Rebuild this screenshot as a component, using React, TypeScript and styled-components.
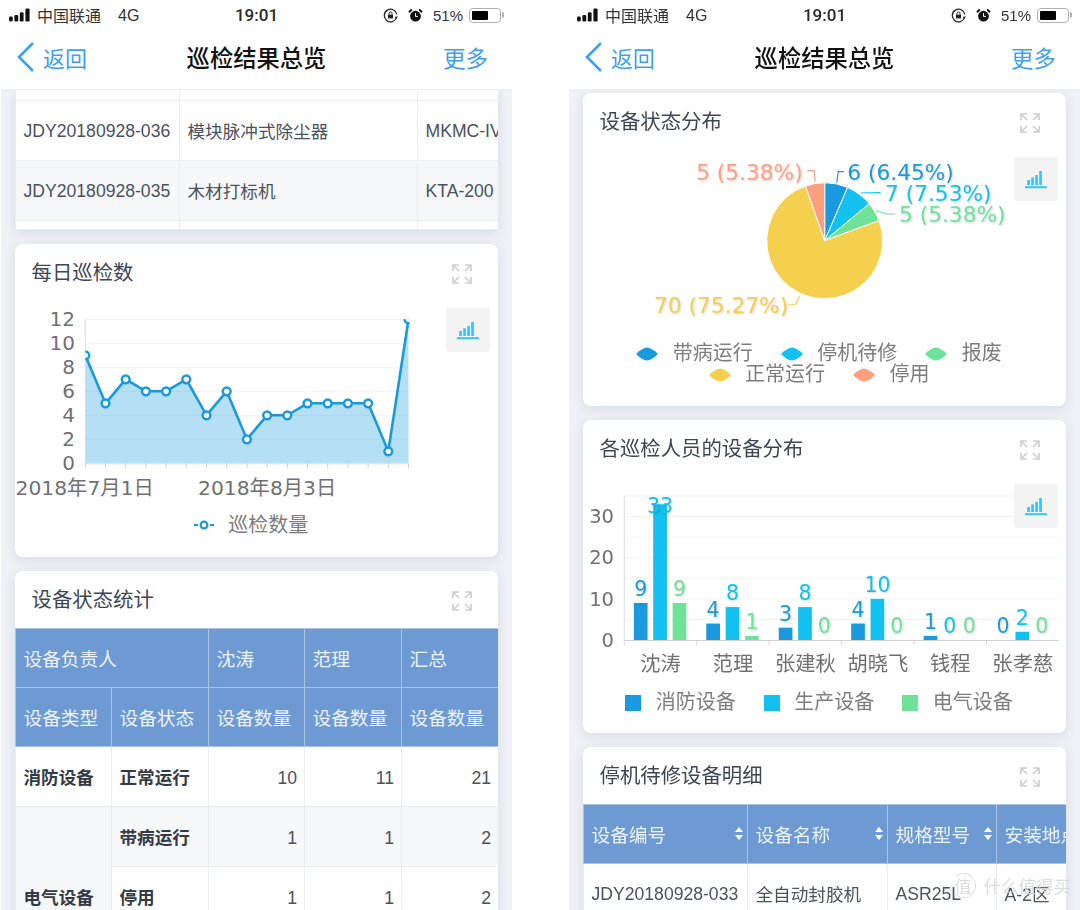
import styled, { createGlobalStyle } from "styled-components";

const SANS = `"Liberation Sans", "Noto Sans CJK SC", sans-serif`;
const CHART = `"DejaVu Sans", "Noto Sans CJK SC", sans-serif`;

const BLUE = "#1a9ade";
const CYAN = "#12c1ef";
const GREEN = "#6fe29a";
const YELLOW = "#f5d04f";
const ORANGE = "#ff9f7f";

const GlobalStyle = createGlobalStyle`
  html, body {
    margin: 0;
    padding: 0;
    background: #fff;
    font-family: ${SANS};
  }
`;

// page
const Page = styled.div`
  position: relative;
  width: 1080px;
  height: 910px;
  overflow: hidden;
  display: flex;
  gap: 57px;
  padding-left: 1px;
  box-sizing: border-box;
  filter: blur(0.35px);
`;

const Phone = styled.div`
  width: 511px;
  height: 910px;
  flex: none;
  overflow: hidden;
  display: flex;
  flex-direction: column;
  background: #f1f3f7;
`;

// status bar
const StatusBar = styled.div`
  height: 30px;
  flex: none;
  background: #fff;
  display: grid;
  grid-template-columns: 1fr auto 1fr;
  align-items: center;
  padding: 0 11px 0 7px;
  box-sizing: border-box;
  color: #333;
  font-size: 16px;
`;

const StatusLeft = styled.div`
  display: flex;
  align-items: center;
  gap: 5px;
`;

const Network = styled.span`
  margin: 2px 0 0 12px;
`;

const StatusTime = styled.div`
  margin-left: 4px;
  font-family: Roboto, sans-serif;
  font-size: 17px;
  font-weight: 500;
  color: #2a2a2a;
`;

const StatusRight = styled.div`
  display: flex;
  align-items: center;
  justify-content: flex-end;
  gap: 10px;
  font-size: 15px;
`;

const Battery = styled.div`
  width: 32px;
  height: 15px;
  margin-left: -4px;
  border: 1.5px solid #b0b0b0;
  border-radius: 4px;
  padding: 2px;
  box-sizing: border-box;
  position: relative;

  &::before {
    content: "";
    display: block;
    width: 16px;
    height: 100%;
    background: #000;
    border-radius: 1px;
  }

  &::after {
    content: "";
    position: absolute;
    right: -4px;
    top: 3px;
    width: 2px;
    height: 6px;
    background: #b0b0b0;
    border-radius: 0 2px 2px 0;
  }
`;

// nav bar
const NavBar = styled.div`
  height: 59px;
  flex: none;
  background: #fff;
  display: grid;
  grid-template-columns: 1fr auto 1fr;
  align-items: center;
  padding: 0 23px 5px;
  box-sizing: border-box;
`;

const NavBack = styled.div`
  display: flex;
  align-items: center;
  gap: 8px;
  margin-left: -8px;
  font-size: 22px;
  color: #3c9ff5;
`;

const NavTitle = styled.div`
  font-size: 23.3px;
  font-weight: 500;
  color: #111;
`;

const NavMore = styled.div`
  text-align: right;
  margin-right: 1px;
  font-size: 22.5px;
  color: #3c9ff5;
`;

// content
const Content = styled.div<{ $top: number }>`
  flex: 1;
  min-height: 0;
  overflow: hidden;
  display: flex;
  flex-direction: column;
  gap: 14px;
  padding: ${(p) => p.$top}px 14px 0;
  background: #eff1f6;
`;

const Card = styled.section<{ $flat?: boolean }>`
  position: relative;
  flex: none;
  background: #fff;
  border-radius: ${(p) => (p.$flat ? "0 0 4px 4px" : "8px")};
  box-shadow: 0 3px 12px rgba(70, 80, 110, 0.13);
  overflow: hidden;
`;

const CardHeader = styled.header`
  height: 57px;
  box-sizing: border-box;
  padding: 17px 26px 0 16.5px;
  display: flex;
  justify-content: space-between;
  align-items: flex-start;
`;

const CardTitle = styled.h2`
  margin: 0;
  font-size: 20.4px;
  line-height: 24px;
  font-weight: 400;
  color: #3d4654;
`;

const ExpandIcon = styled.svg`
  margin-top: 3px;
  flex: none;
`;

const ToolButton = styled.div`
  position: absolute;
  top: 64px;
  right: 8px;
  width: 44px;
  height: 44px;
  border-radius: 3px;
  background: #f3f3f3;
  display: flex;
  align-items: center;
  justify-content: center;
`;

const ChartSvg = styled.svg`
  display: block;
`;

const AxisText = styled.text<{ $size?: number }>`
  font-family: ${CHART};
  font-size: ${(p) => p.$size ?? 19.5}px;
  fill: #707070;
`;

const ValueText = styled.text`
  font-family: ${CHART};
  font-size: 20.5px;
  text-anchor: middle;
  filter: drop-shadow(1px 1px 1px rgba(0, 0, 0, 0.18));
`;

const PieLabel = styled.text`
  font-family: ${CHART};
  font-size: 21.7px;
  filter: drop-shadow(1px 1px 1px rgba(0, 0, 0, 0.18));
`;

const Legend = styled.div<{ $top?: number }>`
  display: flex;
  flex-wrap: wrap;
  justify-content: center;
  column-gap: 28px;
  padding: ${(p) => p.$top ?? 2}px 28px ${(p) => 22 - (p.$top ?? 2)}px 17px;
  font-family: ${CHART};
  font-size: 20px;
  line-height: 21.4px;
  color: #7d7d7d;
`;

const LegendItem = styled.div`
  display: flex;
  align-items: center;
  gap: 14.5px;
`;

const LegendBreak = styled.div`
  flex-basis: 100%;
`;

const LegendSquare = styled.i<{ $color: string }>`
  display: block;
  width: 16px;
  height: 16px;
  background: ${(p) => p.$color};
`;

// tables
const Table = styled.table`
  width: 100%;
  table-layout: fixed;
  border-collapse: collapse;
`;

const Th = styled.th`
  height: 59px;
  padding: 0 4px 1px 7.5px;
  box-sizing: border-box;
  background: #6d9ad3;
  border: 1px solid #a9c3e5;
  color: #edf3fb;
  font-size: 18.7px;
  font-weight: 400;
  text-align: left;
  white-space: nowrap;
  overflow: hidden;
`;

const ThInner = styled.div`
  display: flex;
  align-items: center;
  justify-content: space-between;
`;

const Tr = styled.tr<{ $alt?: boolean }>`
  background: ${(p) => (p.$alt ? "#f6f7f9" : "#fff")};
`;

const Td = styled.td<{ $h?: number; $bold?: boolean; $num?: boolean; $alt?: boolean; $code?: boolean }>`
  height: ${(p) => p.$h ?? 60}px;
  padding: ${(p) => (p.$num ? "4px 7px 0 7.5px" : p.$code ? "2px 0 0 7.5px" : "0 0 0 7.5px")};
  box-sizing: border-box;
  border: 1px solid #ebedf0;
  color: ${(p) => (p.$bold ? "#333a45" : "#4a5160")};
  background: ${(p) => (p.$alt ? "#f6f7f9" : "transparent")};
  font-size: 17.6px;
  font-weight: ${(p) => (p.$bold ? 700 : 400)};
  text-align: ${(p) => (p.$num ? "right" : "left")};
  white-space: nowrap;
  overflow: hidden;
`;

// watermark
const Watermark = styled.div`
  position: absolute;
  right: 9px;
  bottom: 12px;
  display: flex;
  align-items: center;
  gap: 8px;
  color: rgba(215, 215, 215, 0.85);
  font-size: 17.5px;
  font-family: "Noto Sans CJK SC", sans-serif;
`;

const WatermarkMark = styled.span`
  width: 23px;
  height: 23px;
  border-radius: 50%;
  border: 1px solid rgba(215, 215, 215, 0.85);
  border-left-color: transparent;
  display: flex;
  align-items: center;
  justify-content: center;
  font-size: 17px;
`;

// icons
function SignalIcon() {
  return (
    <svg width="24" height="14" viewBox="0 0 24 14">
      <rect x="1" y="8.6" width="3.8" height="4.8" rx="1.4" fill="#111" />
      <rect x="6.4" y="7" width="3.8" height="6.4" rx="1.2" fill="#111" />
      <rect x="11.8" y="4.2" width="3.8" height="9.2" rx="1.2" fill="#111" />
      <rect x="17.4" y="0.6" width="4.2" height="12.8" rx="1.2" fill="#111" />
    </svg>
  );
}

function RotateLockIcon() {
  return (
    <svg width="15" height="15" viewBox="0 0 15 15">
      <path d="M13.6 9.4A6.3 6.3 0 1 1 13.8 6.4" fill="none" stroke="#222" strokeWidth="1.3" />
      <path d="M14.8 8.6l-3 .2 1.8 2.2z" fill="#222" />
      <rect x="5" y="6.6" width="5" height="3.8" fill="#222" />
      <path d="M6 6.6V5.4a1.5 1.5 0 0 1 3 0v1.2" fill="none" stroke="#222" strokeWidth="1" />
    </svg>
  );
}

function AlarmIcon() {
  return (
    <svg width="15" height="15" viewBox="0 0 15 15">
      <circle cx="7.5" cy="8.2" r="5.4" fill="#111" />
      <path d="M1 4.2L3.8 1.4 M14 4.2L11.2 1.4" stroke="#111" strokeWidth="2" />
      <path d="M7.5 5.2v3.2h2.4" fill="none" stroke="#fff" strokeWidth="1" />
    </svg>
  );
}

function BackIcon() {
  return (
    <svg width="19" height="32" viewBox="0 0 19 32">
      <path d="M17 2L3 16l14 14" fill="none" stroke="#3c9ff5" strokeWidth="2.6" />
    </svg>
  );
}

function Expand() {
  return (
    <ExpandIcon width="20" height="20" viewBox="0 0 20 20" fill="none" stroke="#cfcfcf" strokeWidth="1.7">
      <path d="M1 7V1h6 M1 1l6 6" />
      <path d="M13 1h6v6 M19 1l-6 6" />
      <path d="M1 13v6h6 M1 19l6-6" />
      <path d="M13 19h6v-6 M19 19l-6-6" />
    </ExpandIcon>
  );
}

function BarTool() {
  return (
    <svg width="24" height="20" viewBox="0 0 24 20" fill="#33c5ff">
      <rect x="3.2" y="11" width="2.7" height="5" />
      <rect x="7.2" y="8.4" width="2.7" height="7.6" />
      <rect x="11.2" y="6" width="2.7" height="10" />
      <rect x="15.2" y="2" width="2.7" height="14" />
      <rect x="1" y="17.2" width="22" height="2" />
    </svg>
  );
}

function SortIcon() {
  return (
    <svg width="8" height="13" viewBox="0 0 8 13" fill="#fff">
      <path d="M4 0l4 5H0z" />
      <path d="M4 13L0 8h8z" />
    </svg>
  );
}

function LegendLens({ color }: { color: string }) {
  return (
    <svg width="22" height="14" viewBox="0 0 22 14">
      <path d="M0 7Q6 1 11 0.5 16 1 22 7 16 13 11 13.5 6 13 0 7z" fill={color} />
    </svg>
  );
}

// line chart
const dailyCounts = [9, 5, 7, 6, 6, 7, 4, 6, 2, 4, 4, 5, 5, 5, 5, 1, 12];
const LINE_X0 = 85.3;
const LINE_DX = 20.2;
const LINE_Y0 = 463.3;
const LINE_UNIT = 12;

function DailyChart() {
  const pts = dailyCounts.map((v, i) => [LINE_X0 + LINE_DX * i, LINE_Y0 - LINE_UNIT * v]);
  const line = pts.map((p) => p.join(",")).join(" ");
  const xEnd = LINE_X0 + LINE_DX * 16;
  return (
    <ChartSvg width="483" height="212.5" viewBox="15 301 483 212.5">
      <defs>
        <clipPath id="line-clip">
          <rect x={LINE_X0} y={319.3} width={xEnd - LINE_X0 + 1} height={146} />
        </clipPath>
      </defs>
      {[0, 2, 4, 6, 8, 10, 12].map((v) => (
        <g key={v}>
          {v > 0 && <line x1={LINE_X0} x2={xEnd} y1={LINE_Y0 - v * LINE_UNIT} y2={LINE_Y0 - v * LINE_UNIT} stroke="#f3f3f3" />}
          <AxisText x="75" y={LINE_Y0 - v * LINE_UNIT + 7} textAnchor="end" $size={20}>{v}</AxisText>
        </g>
      ))}
      <polygon points={`${LINE_X0},${LINE_Y0} ${line} ${xEnd},${LINE_Y0}`} fill={BLUE} fillOpacity="0.32" />
      <line x1={LINE_X0} x2={LINE_X0} y1="319" y2={LINE_Y0} stroke="#dcdcdc" />
      <line x1={LINE_X0} x2={xEnd} y1={LINE_Y0 + 0.5} y2={LINE_Y0 + 0.5} stroke="#dcdcdc" />
      {dailyCounts.map((_, i) => (
        <line key={i} x1={LINE_X0 + LINE_DX * i} x2={LINE_X0 + LINE_DX * i} y1={LINE_Y0} y2={LINE_Y0 + 5} stroke="#cfcfcf" />
      ))}
      <g clipPath="url(#line-clip)">
        <polyline points={line} fill="none" stroke={BLUE} strokeWidth="2.6" />
        {pts.map((p, i) => (
          <circle key={i} cx={p[0]} cy={p[1]} r="3.9" fill="#fff" stroke={BLUE} strokeWidth="2.5" />
        ))}
      </g>
      <AxisText x="15.5" y="495" $size={20.3}>2018年7月1日</AxisText>
      <AxisText x="198" y="495" $size={20.3}>2018年8月3日</AxisText>
    </ChartSvg>
  );
}

// pie chart
const pieSlices = [
  { value: 6, color: BLUE },
  { value: 7, color: CYAN },
  { value: 5, color: GREEN },
  { value: 70, color: YELLOW },
  { value: 5, color: ORANGE },
];
const PIE_CX = 824.7;
const PIE_CY = 240.7;
const PIE_R = 58;

function slicePath(from: number, to: number) {
  const pt = (a: number) => {
    const rad = (a / 93) * Math.PI * 2 - Math.PI / 2;
    return `${PIE_CX + PIE_R * Math.cos(rad)} ${PIE_CY + PIE_R * Math.sin(rad)}`;
  };
  const large = to - from > 46.5 ? 1 : 0;
  return `M${PIE_CX} ${PIE_CY}L${pt(from)}A${PIE_R} ${PIE_R} 0 ${large} 1 ${pt(to)}Z`;
}

const pieLabels = [
  { text: "5 (5.38%)", x: 802.7, y: 180, anchor: "end", color: ORANGE, leader: "M807.3 170.7h7l.7 11" },
  { text: "6 (6.45%)", x: 847.3, y: 180, anchor: "start", color: BLUE, leader: "M844 171.7h-5.7l-1.6 11" },
  { text: "7 (7.53%)", x: 885, y: 200.7, anchor: "start", color: CYAN, leader: "M860.7 193l20-.3" },
  { text: "5 (5.38%)", x: 899, y: 221.7, anchor: "start", color: GREEN, leader: "M876 210.7l10.7 3.3h8.3" },
  { text: "70 (75.27%)", x: 654, y: 313.3, anchor: "start", color: YELLOW, leader: "M799.3 296l-3.3 8-7.7 1" },
];

function StatusPie() {
  let acc = 0;
  return (
    <ChartSvg width="483" height="191" viewBox="583 150 483 191">
      {pieSlices.map((s) => {
        const d = slicePath(acc, acc + s.value);
        acc += s.value;
        return <path key={s.color} d={d} fill={s.color} stroke="#fff" strokeWidth="1" />;
      })}
      {pieLabels.map((l) => (
        <g key={l.x}>
          <path d={l.leader} fill="none" stroke={l.color} strokeWidth="1.2" />
          <PieLabel x={l.x} y={l.y} textAnchor={l.anchor} fill={l.color}>{l.text}</PieLabel>
        </g>
      ))}
    </ChartSvg>
  );
}

// bar chart
const people = [
  { name: "沈涛", values: [9, 33, 9] },
  { name: "范理", values: [4, 8, 1] },
  { name: "张建秋", values: [3, 8, 0] },
  { name: "胡晓飞", values: [4, 10, 0] },
  { name: "钱程", values: [1, 0, 0] },
  { name: "张孝慈", values: [0, 2, 0] },
];
const barColors = [BLUE, CYAN, GREEN];
const BAR_X0 = 624.3;
const BAR_GROUP = 72.45;
const BAR_Y0 = 640;
const BAR_UNIT = 4.114;

function PeopleBars() {
  return (
    <ChartSvg width="483" height="213" viewBox="583 477 483 213">
      {[5, 10, 15, 20, 25, 30, 35].map((v) => (
        <line key={v} x1={BAR_X0} x2="1059" y1={BAR_Y0 - v * BAR_UNIT} y2={BAR_Y0 - v * BAR_UNIT} stroke="#f3f3f3" />
      ))}
      <line x1={BAR_X0} x2={BAR_X0} y1="496" y2={BAR_Y0} stroke="#dcdcdc" />
      <line x1={BAR_X0} x2="1059" y1={BAR_Y0 + 0.5} y2={BAR_Y0 + 0.5} stroke="#d4d4d4" />
      {people.map((_, i) => (
        <line key={i} x1={BAR_X0 + BAR_GROUP * i} x2={BAR_X0 + BAR_GROUP * i} y1={BAR_Y0} y2={BAR_Y0 + 5} stroke="#d4d4d4" />
      ))}
      <AxisText x="614" y="522.7" textAnchor="end">30</AxisText>
      <AxisText x="614" y="564" textAnchor="end">20</AxisText>
      <AxisText x="614" y="606" textAnchor="end">10</AxisText>
      <AxisText x="614" y="646.7" textAnchor="end">0</AxisText>
      {people.map((p, g) => {
        const c = BAR_X0 + BAR_GROUP * (g + 0.5);
        return (
          <g key={p.name}>
            {p.values.map((v, i) => {
              const h = v * BAR_UNIT;
              const x = c - 26.7 + 19.4 * i;
              const labelY = v === 33 ? 513 : BAR_Y0 - h - 7;
              return (
                <g key={i}>
                  <rect x={x} y={BAR_Y0 - h} width="13.7" height={h} fill={barColors[i]} />
                  <ValueText x={x + 6.85} y={labelY} fill={barColors[i]}>{v}</ValueText>
                </g>
              );
            })}
            <AxisText x={c} y="670.7" textAnchor="middle" $size={20.3}>{p.name}</AxisText>
          </g>
        );
      })}
    </ChartSvg>
  );
}

function CardHead({ title }: { title: string }) {
  return (
    <CardHeader>
      <CardTitle>{title}</CardTitle>
      <Expand />
    </CardHeader>
  );
}

function ChartTool() {
  return (
    <ToolButton>
      <BarTool />
    </ToolButton>
  );
}

function StatusHeader() {
  return (
    <>
      <StatusBar>
        <StatusLeft>
          <SignalIcon />
          <span>中国联通</span>
          <Network>4G</Network>
        </StatusLeft>
        <StatusTime>19:01</StatusTime>
        <StatusRight>
          <RotateLockIcon />
          <AlarmIcon />
          <span>51%</span>
          <Battery />
        </StatusRight>
      </StatusBar>
      <NavBar>
        <NavBack>
          <BackIcon />
          返回
        </NavBack>
        <NavTitle>巡检结果总览</NavTitle>
        <NavMore>更多</NavMore>
      </NavBar>
    </>
  );
}

const listRows = [
  { id: "JDY20180928-036", name: "模块脉冲式除尘器", model: "MKMC-IV" },
  { id: "JDY20180928-035", name: "木材打标机", model: "KTA-200" },
];

const detailHead = ["设备编号", "设备名称", "规格型号", "安装地点"];

export default function App() {
  return (
    <Page>
      <GlobalStyle />
      <Phone>
        <StatusHeader />
        <Content $top={0}>
          <Card $flat>
            <Table>
              <colgroup>
                <col width="164" />
                <col width="238" />
                <col width="81" />
              </colgroup>
              <tbody>
                <Tr>
                  <Td $h={11} />
                  <Td $h={11} />
                  <Td $h={11} />
                </Tr>
                {listRows.map((r, i) => (
                  <Tr key={r.id} $alt={i === 1}>
                    <Td $code>{r.id}</Td>
                    <Td>{r.name}</Td>
                    <Td $code>{r.model}</Td>
                  </Tr>
                ))}
                <Tr>
                  <Td $h={9} />
                  <Td $h={9} />
                  <Td $h={9} />
                </Tr>
              </tbody>
            </Table>
          </Card>

          <Card>
            <CardHead title="每日巡检数" />
            <DailyChart />
            <Legend $top={1}>
              <LegendItem>
                <svg width="20" height="10" viewBox="0 0 20 10">
                  <path d="M0 5h4 M16 5h4" stroke={BLUE} strokeWidth="2" />
                  <circle cx="10" cy="5" r="3.4" fill="#fff" stroke={BLUE} strokeWidth="2.2" />
                </svg>
                巡检数量
              </LegendItem>
            </Legend>
            <ChartTool />
          </Card>

          <Card>
            <CardHead title="设备状态统计" />
            <Table>
              <colgroup>
                <col width="96" />
                <col width="97" />
                <col width="96" />
                <col width="97" />
                <col width="97" />
              </colgroup>
              <thead>
                <tr>
                  <Th colSpan={2}>设备负责人</Th>
                  <Th>沈涛</Th>
                  <Th>范理</Th>
                  <Th>汇总</Th>
                </tr>
                <tr>
                  <Th>设备类型</Th>
                  <Th>设备状态</Th>
                  <Th>设备数量</Th>
                  <Th>设备数量</Th>
                  <Th>设备数量</Th>
                </tr>
              </thead>
              <tbody>
                <Tr>
                  <Td $bold>消防设备</Td>
                  <Td $bold>正常运行</Td>
                  <Td $num>10</Td>
                  <Td $num>11</Td>
                  <Td $num>21</Td>
                </Tr>
                <Tr $alt>
                  <Td $bold $alt rowSpan={3}>电气设备</Td>
                  <Td $bold>带病运行</Td>
                  <Td $num>1</Td>
                  <Td $num>1</Td>
                  <Td $num>2</Td>
                </Tr>
                <Tr>
                  <Td $bold>停用</Td>
                  <Td $num>1</Td>
                  <Td $num>1</Td>
                  <Td $num>2</Td>
                </Tr>
                <Tr $alt>
                  <Td />
                  <Td $num />
                  <Td $num />
                  <Td $num />
                </Tr>
              </tbody>
            </Table>
          </Card>
        </Content>
      </Phone>

      <Phone>
        <StatusHeader />
        <Content $top={4}>
          <Card>
            <CardHead title="设备状态分布" />
            <StatusPie />
            <Legend>
              <LegendItem><LegendLens color={BLUE} />带病运行</LegendItem>
              <LegendItem><LegendLens color={CYAN} />停机待修</LegendItem>
              <LegendItem><LegendLens color={GREEN} />报废</LegendItem>
              <LegendBreak />
              <LegendItem><LegendLens color={YELLOW} />正常运行</LegendItem>
              <LegendItem><LegendLens color={ORANGE} />停用</LegendItem>
            </Legend>
            <ChartTool />
          </Card>

          <Card>
            <CardHead title="各巡检人员的设备分布" />
            <PeopleBars />
            <Legend>
              <LegendItem><LegendSquare $color={BLUE} />消防设备</LegendItem>
              <LegendItem><LegendSquare $color={CYAN} />生产设备</LegendItem>
              <LegendItem><LegendSquare $color={GREEN} />电气设备</LegendItem>
            </Legend>
            <ChartTool />
          </Card>

          <Card>
            <CardHead title="停机待修设备明细" />
            <Table>
              <colgroup>
                <col width="164" />
                <col width="140" />
                <col width="109" />
                <col width="70" />
              </colgroup>
              <thead>
                <tr>
                  {detailHead.map((h) => (
                    <Th key={h}>
                      <ThInner>
                        {h}
                        <SortIcon />
                      </ThInner>
                    </Th>
                  ))}
                </tr>
              </thead>
              <tbody>
                <Tr>
                  <Td $code>JDY20180928-033</Td>
                  <Td>全自动封胶机</Td>
                  <Td $code>ASR25L</Td>
                  <Td>A-2区</Td>
                </Tr>
              </tbody>
            </Table>
          </Card>
        </Content>
      </Phone>

      <Watermark>
        <WatermarkMark>值</WatermarkMark>
        什么值得买
      </Watermark>
    </Page>
  );
}
